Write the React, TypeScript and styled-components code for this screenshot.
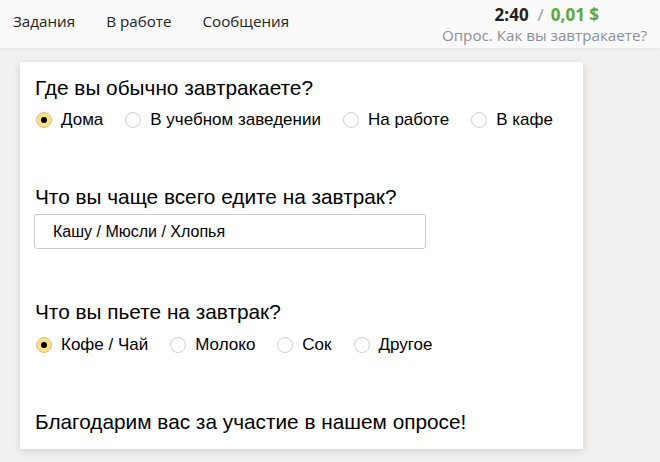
import React, {FC} from 'react';
import styled, {createGlobalStyle} from 'styled-components';

const GlobalStyle = createGlobalStyle`
  html, body {
    margin: 0;
    padding: 0;
    background: #f2f1ef;
  }
  body {
    font-family: 'Liberation Sans', Arial, sans-serif;
    color: #000;
  }
`;

const Page = styled.div`
  width: 660px;
  height: 462px;
  overflow: hidden;
  background: #f2f1ef;
`;

const Header = styled.header`
  height: 48px;
  background: #fafafa;
  box-shadow: 0 1px 4px rgba(0, 0, 0, 0.06);
  display: flex;
  justify-content: space-between;
  align-items: flex-start;
  padding: 0 13px;
  font-family: 'Open Sans', sans-serif;
`;

const Nav = styled.nav`
  display: flex;
  gap: 31px;
  padding-top: 11px;
`;

const NavItem = styled.span`
  font-size: 15.2px;
  color: #222;
`;

const TaskInfo = styled.div`
  display: flex;
  flex-direction: column;
  align-items: flex-end;
  padding-top: 4px;
`;

const Stats = styled.div`
  font-size: 17px;
  font-weight: 700;
  line-height: 22px;
  margin-right: 48px;
`;

const Time = styled.span`
  color: #222;
`;

const Slash = styled.span`
  color: #999;
  font-weight: 400;
  margin: 0 7px 0 9px;
`;

const Money = styled.span`
  color: #5ba93e;
`;

const Subtitle = styled.div`
  font-size: 15.2px;
  color: #8a9199;
  line-height: 18px;
`;

const Card = styled.main`
  margin: 14px 0 0 20px;
  width: 563px;
  background: #fff;
  box-shadow: 0 2px 8px rgba(0, 0, 0, 0.14);
  padding: 14px 15px 15px;
  box-sizing: border-box;
`;

const Question = styled.section<{gap?: number}>`
  margin-bottom: ${(p) => p.gap ?? 0}px;
`;

const Title = styled.h2`
  margin: 0;
  font-size: 20.8px;
  font-weight: 400;
  line-height: 24px;
`;

const Options = styled.div<{top: number}>`
  display: flex;
  gap: 22px;
  padding-left: 1px;
  margin-top: ${(p) => p.top}px;
`;

const Option = styled.label`
  display: flex;
  align-items: center;
  gap: 9px;
  font-size: 17px;
  line-height: 24px;
`;

const RadioCircle = styled.span<{checked?: boolean}>`
  width: 16px;
  height: 16px;
  border-radius: 50%;
  box-sizing: border-box;
  border: 1px solid ${(p) => (p.checked ? '#d9c27c' : '#cfcfcf')};
  background: ${(p) => (p.checked ? '#fde089' : '#fff')};
  display: flex;
  align-items: center;
  justify-content: center;

  &::after {
    content: '';
    width: 6px;
    height: 6px;
    border-radius: 50%;
    background: #000;
    display: ${(p) => (p.checked ? 'block' : 'none')};
  }
`;

const TextField = styled.div`
  width: 392px;
  height: 35px;
  box-sizing: border-box;
  border: 1px solid #cbcbcb;
  border-radius: 3px;
  padding: 0 18px;
  margin: 5px 0 0 -1px;
  display: flex;
  align-items: center;
  font-size: 16px;
`;

const Thanks = styled.p`
  margin: 0;
  font-size: 20.8px;
  line-height: 24px;
`;

interface RadioGroupProps {
  options: string[];
  selected: number;
  top: number;
}

const RadioGroup: FC<RadioGroupProps> = ({options, selected, top}) => (
  <Options top={top}>
    {options.map((o, i) => (
      <Option key={o}>
        <RadioCircle checked={i === selected} />
        {o}
      </Option>
    ))}
  </Options>
);

const App: FC = () => {
  return (
    <Page>
      <GlobalStyle />
      <Header>
        <Nav>
          <NavItem>Задания</NavItem>
          <NavItem>В работе</NavItem>
          <NavItem>Сообщения</NavItem>
        </Nav>
        <TaskInfo>
          <Stats>
            <Time>2:40</Time>
            <Slash>/</Slash>
            <Money>0,01 $</Money>
          </Stats>
          <Subtitle>Опрос. Как вы завтракаете?</Subtitle>
        </TaskInfo>
      </Header>
      <Card>
        <Question gap={53}>
          <Title>Где вы обычно завтракаете?</Title>
          <RadioGroup
            options={['Дома', 'В учебном заведении', 'На работе', 'В кафе']}
            selected={0}
            top={8}
          />
        </Question>
        <Question gap={51}>
          <Title>Что вы чаще всего едите на завтрак?</Title>
          <TextField>Кашу / Мюсли / Хлопья</TextField>
        </Question>
        <Question gap={53}>
          <Title>Что вы пьете на завтрак?</Title>
          <RadioGroup options={['Кофе / Чай', 'Молоко', 'Сок', 'Другое']} selected={0} top={9} />
        </Question>
        <Thanks>Благодарим вас за участие в нашем опросе!</Thanks>
      </Card>
    </Page>
  );
};

export default App;
